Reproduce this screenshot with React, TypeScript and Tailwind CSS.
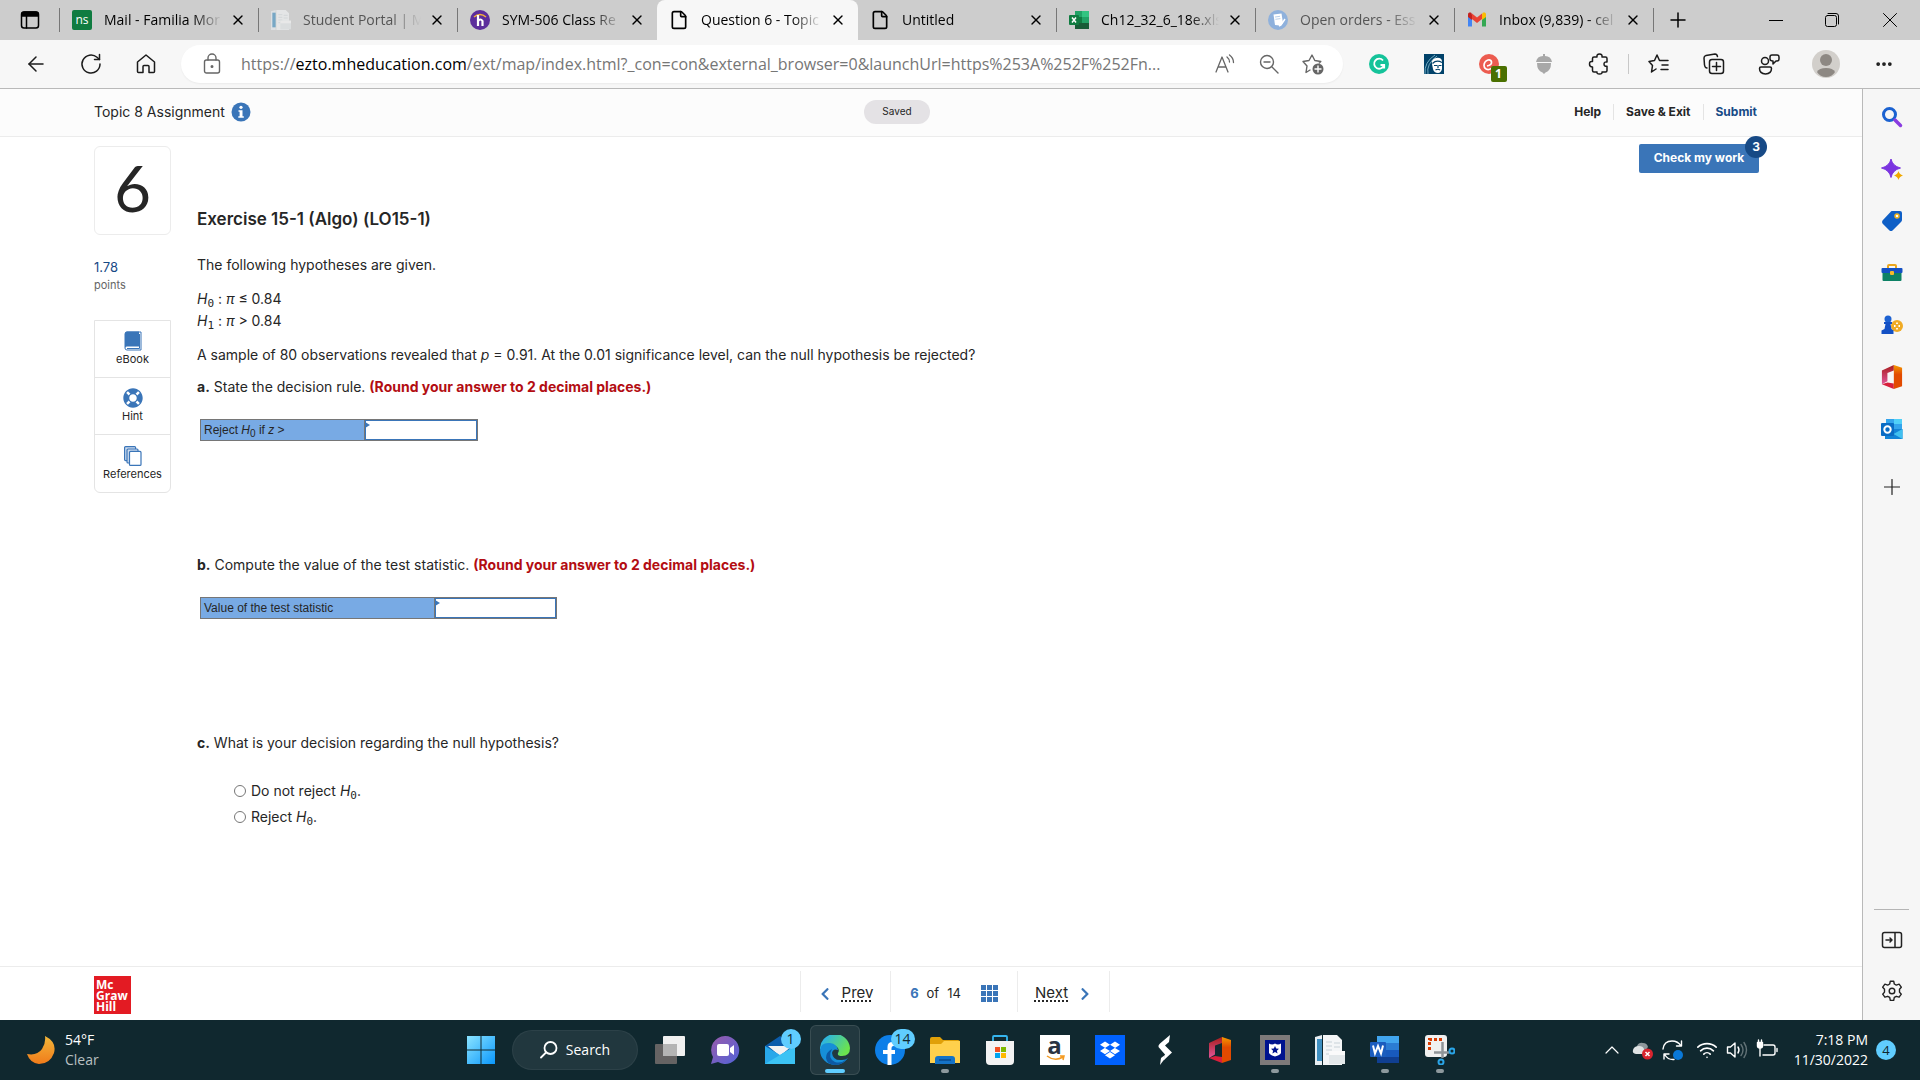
import { useState } from "react";
import type { ReactNode } from "react";
import {
  Plus,
  X,
  File,
  ArrowLeft,
  Ellipsis,
  ChevronUp,
  Wifi,
} from "lucide-react";
import { FaLifeRing, FaDropbox, FaChevronLeft, FaChevronRight } from "react-icons/fa";

const line = {
  fill: "none",
  stroke: "currentColor",
  strokeLinecap: "round" as const,
  strokeLinejoin: "round" as const,
};

/* ---------- tab icons ---------- */

function DocsIcon({ className }: { className?: string }) {
  return (
    <svg viewBox="0 0 30 30" className={className}>
      <path d="M0 2l7-2v30H0z" fill="#e8eef2" />
      <path d="M2 4h5v22H2z" fill="#3f8fc0" />
      <path d="M8 0h14l5 5v25H8z" fill="#f4f6f7" />
      <path d="M11 7h6M11 11h6M11 15h6M11 19h6M19 8h6M19 12h6" stroke="#c8d2d8" />
      <path d="M14 16h16v13H14z" fill="#e3e8ea" />
      <path d="M14 16h16v4H14z" fill="#fafafa" />
    </svg>
  );
}

function ExcelIcon() {
  return (
    <svg viewBox="0 0 20 20" className="size-5">
      <path d="M6 1h7v6H6z" fill="#21a366" />
      <path d="M13 1h7v6h-7z" fill="#33c481" />
      <path d="M6 7h7v6H6z" fill="#107c41" />
      <path d="M13 7h7v6h-7z" fill="#21a366" />
      <path d="M6 13h14v6H6z" fill="#185c37" />
      <rect y="5" width="10" height="10" rx="1" fill="#107c41" />
      <path d="M3 7.500l4 5M7 7.500l-4 5" stroke="#fff" strokeWidth="1.500" />
    </svg>
  );
}

function GmailIcon() {
  return (
    <svg viewBox="0 0 20 20" className="size-5">
      <path d="M1 4.500v12h4V9z" fill="#4285f4" />
      <path d="M19 4.500v12h-4V9z" fill="#34a853" />
      <path d="M15 5v5l4-3V4.500C19 2.500 17 2 15.500 3z" fill="#fbbc04" />
      <path d="M5 5v5L1 7V4.500C1 2.500 3 2 4.500 3z" fill="#c5221f" />
      <path d="M5 3.500l5 4 5-4V9l-5 4-5-4z" fill="#ea4335" />
    </svg>
  );
}

interface Tab {
  title: string;
  icon: ReactNode;
  active?: boolean;
  dim?: boolean;
  noDivider?: boolean;
}

const tabs: Tab[] = [
  {
    title: "Mail - Familia Mor",
    icon: (
      <span className="flex size-5 items-center justify-center rounded-xs bg-[#107c41] text-xs leading-none text-white">
        ns
      </span>
    ),
  },
  { title: "Student Portal | M", icon: <DocsIcon className="size-5 opacity-60" />, dim: true },
  {
    title: "SYM-506 Class Re",
    icon: (
      <svg viewBox="0 0 20 20" className="size-5">
        <circle cx="10" cy="10" r="10" fill="#5c2d9c" />
        <path d="M4 7q6-5 12 0" fill="none" stroke="#f5b335" strokeWidth="1.500" />
        <path d="M8 5v11M8 11q2.500-3 4.500 0v5" fill="none" stroke="#fff" strokeWidth="2.200" />
      </svg>
    ),
    noDivider: true,
  },
  {
    title: "Question 6 - Topic",
    icon: <File className="size-5" strokeWidth={2} />,
    active: true,
    noDivider: true,
  },
  { title: "Untitled", icon: <File className="size-5" strokeWidth={2} /> },
  { title: "Ch12_32_6_18e.xls", icon: <ExcelIcon /> },
  {
    title: "Open orders - Ess",
    icon: (
      <svg viewBox="0 0 20 20" className="size-5">
        <circle cx="10" cy="10" r="10" fill="#8fb1dc" />
        <path d="M5.500 4.500l8-1 1.500 9.500-3 2.500-5-.5z" fill="#fff" />
        <path d="M7 7l5-.7M7.400 9.300l5-.7" stroke="#b9cfea" />
        <path d="M17 9l-4 6-2 1" stroke="#fff" strokeWidth="1.500" fill="none" />
      </svg>
    ),
    dim: true,
  },
  { title: "Inbox (9,839) - cel", icon: <GmailIcon /> },
];

function TabStrip() {
  return (
    <div className="flex h-10 items-stretch bg-[#cdcdcd] text-black">
      <button aria-label="Tab actions" className="flex w-[59px] items-center justify-center">
        <svg viewBox="0 0 20 20" className="size-5" {...line} strokeWidth="1.500">
          <rect x="1.500" y="2" width="17" height="16" rx="2.500" />
          <path d="M2 4q0-2 2.500-2h11Q18 2 18 4v2H2z" fill="currentColor" />
          <path d="M6.500 6v12" />
        </svg>
      </button>
      <span className="my-2 w-px bg-[#777]" />
      {tabs.map((tab) => (
        <div
          key={tab.title}
          className={
            tab.active
              ? "flex w-[201px] rounded-t-lg bg-[#f7f7f7]"
              : "flex w-[199px]"
          }
        >
          <div className="flex min-w-0 flex-1 items-center px-3">
            <span className="w-8 shrink-0">{tab.icon}</span>
            <span
              className={
                "min-w-0 flex-1 overflow-hidden [mask-image:linear-gradient(to_right,black_75%,transparent_100%)] text-sm whitespace-nowrap " +
                (tab.dim ? "text-[#555]" : "text-black")
              }
            >
              {tab.title}
            </span>
            <button aria-label={"Close " + tab.title} className="ml-2 p-0">
              <X className="size-4" strokeWidth={2} />
            </button>
          </div>
          {!tab.noDivider && <span className="my-2 w-px bg-[#777]" />}
        </div>
      ))}
      <button aria-label="New tab" className="ml-1 px-2">
        <Plus className="size-6" strokeWidth={1.5} />
      </button>
      <div className="ml-auto flex">
        <button aria-label="Minimize" className="flex w-14 items-center justify-center">
          <svg viewBox="0 0 14 14" className="size-3.5" {...line}>
            <path d="M0 7.500h14" />
          </svg>
        </button>
        <button aria-label="Restore" className="flex w-14 items-center justify-center">
          <svg viewBox="0 0 14 14" className="size-3.5" {...line}>
            <rect x=".5" y="2.500" width="11" height="11" rx="2" />
            <path d="M3 .5h8q2.500 0 2.500 2.500v8" />
          </svg>
        </button>
        <button aria-label="Close window" className="flex w-15 items-center justify-center">
          <svg viewBox="0 0 14 14" className="size-3.5" {...line}>
            <path d="M.5.5l13 13M13.500.5l-13 13" />
          </svg>
        </button>
      </div>
    </div>
  );
}

/* ---------- toolbar ---------- */

function BarButton({ label, children }: { label: string; children: ReactNode }) {
  return (
    <button aria-label={label} className="flex w-[55px] shrink-0 items-center justify-center">
      {children}
    </button>
  );
}

function Toolbar() {
  return (
    <div className="flex h-12 items-stretch bg-[#f7f7f7] pl-2 text-[#1b1b1b]">
      <BarButton label="Back">
        <ArrowLeft className="size-6" strokeWidth={1.5} />
      </BarButton>
      <BarButton label="Refresh">
        <svg viewBox="0 0 22 22" className="size-[22px]" {...line} strokeWidth="1.500">
          <path d="M20 11a9 9 0 1 1-3-6.700L19.500 6.500" />
          <path d="M19.500 1.500v5h-5" />
        </svg>
      </BarButton>
      <BarButton label="Home">
        <svg viewBox="0 0 20 20" className="size-5" {...line} strokeWidth="1.500">
          <path d="M1.500 8L10 1l8.500 7v9.500q0 1-1 1H13v-6q0-1-1-1H8q-1 0-1 1v6H2.500q-1 0-1-1z" />
        </svg>
      </BarButton>
      <div className="my-[5px] ml-2 flex min-w-0 flex-1 items-center rounded-full bg-white pr-2 pl-[22px] shadow-xs">
        <svg viewBox="0 0 18 22" className="h-[22px] w-[18px] shrink-0 text-[#666]" {...line} strokeWidth="1.400">
          <rect x="1.500" y="7" width="15" height="13" rx="2" />
          <path d="M5 7V5a4 4 0 0 1 8 0v2" />
          <circle cx="9" cy="13.500" r=".8" fill="currentColor" />
        </svg>
        <span className="ml-5 min-w-0 flex-1 truncate text-base text-[#767676]">
          https://<span className="text-black">ezto.mheducation.com</span>
          /ext/map/index.html?_con=con&amp;external_browser=0&amp;launchUrl=https%253A%252F%252Fn...
        </span>
        <button aria-label="Read aloud" className="flex w-11 justify-center text-[#666]">
          <svg viewBox="0 0 20 20" className="size-5" {...line} strokeWidth="1.300">
            <path d="M1 18L7 3l6 15M3 13h8" />
            <path d="M12 3q2.500 2 2.500 5M14.500 1q4 3 4 7.500" />
          </svg>
        </button>
        <button aria-label="Zoom out" className="flex w-11 justify-center text-[#666]">
          <svg viewBox="0 0 20 20" className="size-5" {...line} strokeWidth="1.400">
            <circle cx="8" cy="8" r="6.500" />
            <path d="M13 13l6 6M5 8h6" />
          </svg>
        </button>
        <button aria-label="Add to favorites" className="flex w-11 justify-center text-[#666]">
          <svg viewBox="0 0 22 22" className="size-[22px]" {...line} strokeWidth="1.400">
            <path d="M8 17l-4 2.500 1-6.500-4-4.500 6-1L10 2l2.800 5.500 6 1-1.500 1.500" />
            <circle cx="16" cy="16" r="5.500" fill="#666" stroke="none" />
            <path d="M16 13v6M13 16h6" stroke="#fff" />
          </svg>
        </button>
      </div>
      <div className="mr-2 ml-2 flex">
        <BarButton label="Grammarly">
          <svg viewBox="0 0 20 20" className="size-5">
            <circle cx="10" cy="10" r="10" fill="#15c39a" />
            <path d="M14 6.500a5 5 0 1 0 1 4.500h-3.500M15.200 11v3.500" fill="none" stroke="#fff" strokeWidth="1.800" />
          </svg>
        </BarButton>
        <BarButton label="Alaska">
          <svg viewBox="0 0 20 20" className="size-5">
            <rect width="20" height="20" fill="#01426a" />
            <path d="M1 20Q0 8 11 1M4 20Q2 10 13 2" fill="none" stroke="#8ec5d6" strokeWidth=".8" />
            <path d="M8 10q-1-5 4-6 5-1 6 3v8q-1 4-4 4-4 0-5-4z" fill="#fff" />
            <path d="M8.500 9.500q4-4 9.500-1M10 11.500h3M15 11.500h2.500M11.500 16q2.500-1.500 4.500 0M14 11v3" fill="none" stroke="#01426a" strokeWidth="1.200" />
          </svg>
        </BarButton>
        <BarButton label="Coupons">
          <span className="relative">
            <svg viewBox="0 0 20 20" className="size-5">
              <circle cx="10" cy="10" r="10" fill="#ec5c50" />
              <path d="M8 12q5-1 4.500-4-.5-2.500-3.500-2-4 1.500-4 5.500.5 4.500 5 4 3-.5 5-3" fill="none" stroke="#fff" strokeWidth="1.700" />
            </svg>
            <span className="absolute top-3 left-3 flex h-4 w-4 items-center justify-center rounded-xs bg-[#4a7000] text-xs font-bold text-white">
              1
            </span>
          </span>
        </BarButton>
        <BarButton label="Acorn">
          <svg viewBox="0 0 20 20" className="size-5" fill="#a8a8a8">
            <path d="M9 0h2v2q6 0 7 6H2q1-6 7-6zM3 9h14q0 8-5.500 9.500L10 20l-1.500-1.500Q3 17 3 9z" />
          </svg>
        </BarButton>
        <BarButton label="Extensions">
          <svg viewBox="0 0 22 22" className="size-[22px]" {...line} strokeWidth="1.500">
            <path d="M6 4h3q-.5-3 2.500-3T14 4h3.500q1.500 0 1.500 1.500V9q-3-.5-3 2t3 2.300v4.200q0 1.500-1.500 1.500H14q.5 2-2.500 2T9 19H6q-1.500 0-1.500-1.500V14Q1.500 14 1.500 11t3-2.500v-3Q4.500 4 6 4z" />
          </svg>
        </BarButton>
        <span className="mx-0.5 my-3.5 w-px bg-[#c8c8c8]" />
        <BarButton label="Favorites">
          <svg viewBox="0 0 22 22" className="size-[22px]" {...line} strokeWidth="1.500">
            <path d="M8 16l-4.500 3 1-6.500L1 8.500l5.500-1L9 2l2.500 5.500H20M14 12h6M13 16.500h7" />
          </svg>
        </BarButton>
        <BarButton label="Collections">
          <svg viewBox="0 0 22 22" className="size-[22px]" {...line} strokeWidth="1.500">
            <path d="M4 15Q2 15 1.500 12L1 5q0-2 2-2.500L12 1q2 0 2.500 2.500" />
            <rect x="6.500" y="6.500" width="14" height="14" rx="2.500" />
            <path d="M13.500 9.500v8M9.500 13.500h8" />
          </svg>
        </BarButton>
        <BarButton label="Performance">
          <svg viewBox="0 0 22 22" className="size-[22px]" {...line} strokeWidth="1.500">
            <circle cx="7" cy="8" r="3.500" />
            <path d="M3 14h9q1.500 0 1.500 1.500 0 5-6 5.500-6-.5-6-5.500Q1.500 14 3 14z" />
            <path d="M14 2h5q2 0 2 2v2q0 2-2 2h-1l-3 3V8q-3 0-3-2V4q0-2 2-2z" />
          </svg>
        </BarButton>
        <button aria-label="Profile" className="flex w-15 items-center justify-center">
          <svg viewBox="0 0 28 28" className="size-7">
            <circle cx="14" cy="14" r="14" fill="#d2cfcb" />
            <circle cx="14" cy="10" r="6" fill="#8d8883" />
            <path d="M5 22q2-4 9-4t9 4q-3 5-9 5t-9-5z" fill="#8d8883" />
          </svg>
        </button>
        <button aria-label="Settings and more" className="flex w-14 items-center justify-center">
          <Ellipsis className="size-5" strokeWidth={2.5} />
        </button>
      </div>
    </div>
  );
}

/* ---------- side rail ---------- */

function OfficeIcon({ className }: { className?: string }) {
  return (
    <svg viewBox="0 0 24 26" className={className}>
      <defs>
        <linearGradient id="office-side" x1="0" y1="0" x2="0" y2="1">
          <stop offset="0" stopColor="#a81d1d" />
          <stop offset="1" stopColor="#e0579a" />
        </linearGradient>
        <linearGradient id="office-front" x1="0" y1="0" x2="0" y2="1">
          <stop offset="0" stopColor="#f59a00" />
          <stop offset=".4" stopColor="#e24a00" />
        </linearGradient>
      </defs>
      <path d="M1 6l13-6v6l-7 2.500v9L1 21z" fill="url(#office-side)" />
      <path d="M1 21l6-2 7 1v6z" fill="#d81f3c" />
      <path d="M14 0l9 3v20l-9 3z" fill="url(#office-front)" />
    </svg>
  );
}

const railItems: { label: string; icon: ReactNode }[] = [
  {
    label: "Search",
    icon: (
      <svg viewBox="0 0 22 22" className="size-[22px]" fill="none">
        <circle cx="8.500" cy="8.500" r="6" stroke="#1b62d1" strokeWidth="3" />
        <path d="M14 14l5.500 5.500" stroke="#8a3ce0" strokeWidth="3.500" strokeLinecap="round" />
      </svg>
    ),
  },
  {
    label: "Discover",
    icon: (
      <svg viewBox="0 0 22 22" className="size-[22px]">
        <path d="M10 1q1.500 7 9.500 9-8 2-9.500 9.500Q8.500 12 .5 10 8.500 8 10 1z" fill="#7b35e0" stroke="#7b35e0" />
        <path d="M17.500 13q.7 3.300 4.500 4.500-3.800 1-4.500 4.500-.8-3.500-4.500-4.500 3.700-1.200 4.500-4.500z" fill="#f0a800" />
      </svg>
    ),
  },
  {
    label: "Shopping",
    icon: (
      <svg viewBox="0 0 22 22" className="size-[22px]">
        <path d="M11 1h8q2 0 2 2v7q0 1-1 2l-8.500 8.500q-1.500 1-3 0l-7-7q-1-1.500 0-3L9.500 2q.5-1 1.500-1z" fill="#0f5fc6" />
        <circle cx="16" cy="6" r="2" fill="#fff" stroke="#f2b31b" strokeWidth="1.500" />
      </svg>
    ),
  },
  {
    label: "Tools",
    icon: (
      <svg viewBox="0 0 22 22" className="size-[22px]">
        <path d="M7 7V4q0-1 1-1h6q1 0 1 1v3" fill="none" stroke="#eba61c" strokeWidth="2" />
        <rect x="1.500" y="9" width="19" height="10" rx="1" fill="#0d8165" />
        <rect x=".5" y="6" width="21" height="5" rx="1" fill="#1350c4" />
        <rect x="9" y="9" width="4" height="4" rx="1" fill="#f5b92b" />
      </svg>
    ),
  },
  {
    label: "Games",
    icon: (
      <svg viewBox="0 0 22 22" className="size-[22px]">
        <circle cx="16" cy="12" r="6" fill="#f0ab25" />
        <path d="M16 8.500v1.500M13 12h1.500M17.500 12H19M16 14v1.500" stroke="#fff" strokeWidth="1.800" />
        <circle cx="7" cy="5" r="3.500" fill="#1d62d2" />
        <path d="M3 8h8v2H9.500l1 5 2 1.500V20H.5v-3.500L3.500 15l1-5H3z" fill="#1350c4" />
      </svg>
    ),
  },
  { label: "Office", icon: <OfficeIcon className="h-6 w-[22px]" /> },
  {
    label: "Outlook",
    icon: (
      <svg viewBox="0 0 22 22" className="size-[22px]">
        <path d="M5 1h16v12H5z" fill="#33a4ec" />
        <path d="M13 1h8v5h-8z" fill="#50d0f8" />
        <path d="M4 11h17.500v10H4z" fill="#1383d6" />
        <path d="M21.500 11v10l-9-5z" fill="#41c0f0" />
        <rect y="5" width="13" height="13" rx="1" fill="#0a6cc4" />
        <circle cx="6.500" cy="11.500" r="3.200" fill="none" stroke="#fff" strokeWidth="2" />
      </svg>
    ),
  },
];

function SideRail() {
  return (
    <aside className="flex w-[57px] flex-col items-center bg-[#f6f6f6] pt-0.5 text-[#222]">
      {railItems.map((item) => (
        <button
          key={item.label}
          aria-label={item.label}
          className="flex h-13 w-full items-center justify-center"
        >
          {item.icon}
        </button>
      ))}
      <button aria-label="Add" className="mt-3 flex h-10 items-center">
        <svg viewBox="0 0 16 16" className="size-4" {...line} strokeWidth="1.200">
          <path d="M8 .5v15M.5 8h15" />
        </svg>
      </button>
      <div className="mt-auto mb-4 flex flex-col items-center">
        <span className="mb-4 h-px w-[35px] bg-[#b5b5b5]" />
        <button aria-label="Hide sidebar" className="mb-4 flex h-[27px] items-center">
          <svg viewBox="0 0 22 18" className="h-[18px] w-[22px]" {...line} strokeWidth="1.500">
            <rect x="1.500" y="1.500" width="19" height="15" rx="2" />
            <path d="M14 2v14M5 9h6M9 7l2 2-2 2" />
          </svg>
        </button>
        <button aria-label="Settings" className="mt-2 flex h-[27px] items-center">
          <svg viewBox="0 0 22 22" className="size-[22px]" {...line} strokeWidth="1.400">
            <path d="M9.300 1.200h3.400l.6 2.800 2 1.100 2.800-.9 2.200 3-1.800 2.100v2.800l1.800 2.100-2.200 3-2.800-.9-2 1.100-.6 3H9.300l-.6-3-2-1.100-2.800.9-2.200-3 1.800-2.100V9.300L1.700 7.200l2.200-3 2.800.9 2-1.100z" />
            <circle cx="11" cy="11" r="2.800" />
          </svg>
        </button>
      </div>
    </aside>
  );
}

/* ---------- assignment page ---------- */

function PageHeader() {
  return (
    <header className="grid h-12 grid-cols-[1fr_auto_932px] items-center border-b border-[#ececec] bg-[#fcfcfc] pb-0.5 pl-[94px]">
      <div className="flex items-center gap-1.5 text-sm">
        <h1>Topic 8 Assignment</h1>
        <button aria-label="Assignment information">
          <svg viewBox="0 0 20 20" className="size-5">
            <circle cx="10" cy="10" r="9.500" fill="#3a75b8" />
            <circle cx="10" cy="5.300" r="1.600" fill="#fff" />
            <path d="M7.500 8.300h4v6h1.300v1.500H7.300v-1.500h1.300V9.800H7.500z" fill="#fff" />
          </svg>
        </button>
      </div>
      <div className="w-[66px]">
        <span className="flex h-6 items-center justify-center rounded-xl bg-[#e4e2e5] text-[10px]">Saved</span>
      </div>
      <nav className="mr-[105px] ml-auto flex items-center text-xs font-bold">
        <a href="#help" className="px-3">Help</a>
        <a href="#save" className="border-x border-[#e4e4e4] px-3">Save &amp; Exit</a>
        <a href="#submit" className="pl-3 text-[#174a86]">Submit</a>
      </nav>
    </header>
  );
}

function Hypothesis({ index }: { index: string }) {
  return (
    <>
      <i>H</i>
      <sub className="font-['DejaVu_Sans_Mono',monospace] text-[11px]">{index}</sub>
    </>
  );
}

interface AnswerProps {
  id: string;
  label: ReactNode;
  labelClass: string;
  inputClass: string;
}

function AnswerTable({ id, label, labelClass, inputClass }: AnswerProps) {
  const [value, setValue] = useState("");

  return (
    <table className="ml-[3px] border-collapse font-['Liberation_Sans',Arial,sans-serif] text-xs">
      <tbody>
        <tr className="h-[21px]">
          <th
            scope="row"
            className={"border border-[#767676] bg-[#78aae4] px-[3px] text-left align-top font-normal " + labelClass}
          >
            <label htmlFor={id} className="block leading-5">
              {label}
            </label>
          </th>
          <td className={"relative border border-[#767676] p-0 " + inputClass}>
            <input
              id={id}
              value={value}
              onChange={(e) => setValue(e.target.value)}
              className="block h-5 w-full border border-[#3a75b8] bg-white px-1 outline-none"
            />
            <svg viewBox="0 0 5 6" className="absolute top-0.5 left-0 h-1.5 w-[5px]">
              <path d="M0 0l5 3-5 3z" fill="#3a75b8" />
            </svg>
          </td>
        </tr>
      </tbody>
    </table>
  );
}

function ToolLinks() {
  const items = [
    {
      label: "eBook",
      icon: (
        <svg viewBox="0 0 18 20" className="h-5 w-[18px]">
          <path d="M3 1h14v18H3Q1 19 1 17V3q0-2 2-2z" fill="#fff" stroke="#3a75b8" />
          <path d="M3 .5h12v15H3Q.5 16 1 18V2.500Q1 .5 3 .5z" fill="#3a75b8" />
          <path d="M3 17.500h12.500V3" fill="none" stroke="#3a75b8" />
        </svg>
      ),
    },
    { label: "Hint", icon: <FaLifeRing className="size-5 text-[#3a75b8]" /> },
    {
      label: "References",
      icon: (
        <svg viewBox="0 0 18 20" className="h-5 w-[18px]" fill="#fff" stroke="#3a75b8" strokeWidth="1.200">
          <rect x=".6" y=".6" width="11" height="14" rx="1" fill="#cddbee" />
          <rect x="3" y="3" width="11" height="14" rx="1" fill="#cddbee" />
          <rect x="5.500" y="5.400" width="11.500" height="14" rx="1" />
        </svg>
      ),
    },
  ];

  return (
    <div className="mt-[25px] divide-y divide-[#e4e4e4] rounded-b-md border border-[#e4e4e4]">
      {items.map((item) => (
        <button
          key={item.label}
          className="flex h-[57px] w-full flex-col items-center justify-center gap-0.5 pb-0.5 text-[11px] leading-3"
        >
          {item.icon}
          {item.label}
        </button>
      ))}
    </div>
  );
}

const red = "font-bold text-[#b30d12]";

function Question() {
  const [choice, setChoice] = useState("");

  return (
    <main className="flex flex-1 items-start pr-[103px] pl-[94px]">
      <div className="mt-[9px] w-[77px] shrink-0">
        <div className="flex h-[89px] items-center justify-center rounded-md border border-[#ececec] pb-1.5 font-['Lato',sans-serif] text-[64px] leading-none">
          6
        </div>
        <p className="mt-6 text-[13px] leading-4 text-[#174a86]">1.78</p>
        <p className="text-[11px] leading-5 text-[#666]">points</p>
        <ToolLinks />
      </div>

      <article className="ml-[26px] flex-1 text-sm leading-5">
        <h2 className="mt-[70px] text-[17px] leading-6 font-semibold">Exercise 15-1 (Algo) (LO15-1)</h2>
        <p className="mt-6">The following hypotheses are given.</p>
        <div className="mt-[13px] leading-[22px]">
          <p>
            <Hypothesis index="0" /> : <i>π</i> ≤ 0.84
          </p>
          <p>
            <Hypothesis index="1" /> : <i>π</i> &gt; 0.84
          </p>
        </div>
        <p className="mt-[13px]">
          A sample of 80 observations revealed that <i>p</i> = 0.91. At the 0.01 significance level, can the null
          hypothesis be rejected?
        </p>
        <p className="mt-3">
          <b>a.</b> State the decision rule. <span className={red}>(Round your answer to 2 decimal places.)</span>
        </p>
        <div className="mt-[22px] mb-[114px]">
          <AnswerTable
            id="reject-z"
            label={
              <>
                Reject <i>H</i>
                <sub className="text-[10px]">0</sub> if <i>z</i> &gt;
              </>
            }
            labelClass="w-[164px]"
            inputClass="w-[113px]"
          />
        </div>
        <p>
          <b>b.</b> Compute the value of the test statistic.{" "}
          <span className={red}>(Round your answer to 2 decimal places.)</span>
        </p>
        <div className="mt-[22px] mb-[114px]">
          <AnswerTable
            id="test-statistic"
            label="Value of the test statistic"
            labelClass="w-[234px]"
            inputClass="w-[122px]"
          />
        </div>
        <p>
          <b>c.</b> What is your decision regarding the null hypothesis?
        </p>
        <div className="mt-[25px] ml-[37px] flex flex-col items-start">
          {["Do not reject", "Reject"].map((text) => (
            <label key={text} className="flex h-[26px] items-center gap-[5px]">
              <input
                type="radio"
                name="decision"
                value={text}
                checked={choice === text}
                onChange={() => setChoice(text)}
                className="size-3"
              />
              <span>
                {text} <Hypothesis index="0" />.
              </span>
            </label>
          ))}
        </div>
      </article>

      <button className="relative mt-[7px] -ml-[120px] h-[29px] w-[120px] rounded-xs bg-[#3a75b8] pb-0.5 text-xs font-bold text-white">
        Check my work
        <span className="absolute -top-2 -right-2 flex size-[22px] items-center justify-center rounded-full bg-[#174a86]">
          3
        </span>
      </button>
    </main>
  );
}

function PageFooter() {
  return (
    <footer className="grid h-[54px] grid-cols-[1fr_auto_752px] items-start border-t border-[#ececec] pl-[94px]">
      <div className="mt-[9px] flex h-[38px] w-[37px] flex-col justify-center bg-[#e31b23] pl-0.5 font-['Open_Sans',sans-serif] text-xs leading-[11px] font-bold text-white">
        <span>Mc</span>
        <span>Graw</span>
        <span>Hill</span>
      </div>
      <nav className="mt-1 flex h-[41px] items-stretch divide-x divide-[#ececec] border-x border-[#ececec] text-[15px]">
        <button className="flex w-[90px] items-center justify-center gap-2.5 pt-1">
          <FaChevronLeft className="size-3.5 text-[#3a75b8]" />
          <span className="underline decoration-dotted decoration-2 underline-offset-2">Prev</span>
        </button>
        <div className="flex w-[127px] items-center justify-center gap-2 pt-1 text-[13px]">
          <b className="text-[#3a75b8]">6</b>
          <span>of</span>
          <span>14</span>
          <button aria-label="Question list" className="ml-3">
            <svg viewBox="0 0 17 17" className="size-[17px]" fill="#3a75b8">
              <path d="M0 0h5v5H0zM6 0h5v5H6zM12 0h5v5h-5zM0 6h5v5H0zM6 6h5v5H6zM12 6h5v5h-5zM0 12h5v5H0zM6 12h5v5H6zM12 12h5v5h-5z" />
            </svg>
          </button>
        </div>
        <button className="flex w-[91px] items-center justify-center gap-2.5 pt-1">
          <span className="underline decoration-dotted decoration-2 underline-offset-2">Next</span>
          <FaChevronRight className="size-3.5 text-[#3a75b8]" />
        </button>
      </nav>
    </footer>
  );
}

/* ---------- taskbar ---------- */

function Badge({ children }: { children: ReactNode }) {
  return (
    <span className="absolute -top-1.5 left-4 flex h-5 min-w-5 items-center justify-center rounded-full bg-[#60cdff] px-1 text-sm leading-none text-[#10282f]">
      {children}
    </span>
  );
}

interface TaskbarApp {
  label: string;
  icon: ReactNode;
  badge?: string;
  running?: boolean;
  active?: boolean;
}

const apps: TaskbarApp[] = [
  {
    label: "Task view",
    icon: (
      <svg viewBox="0 0 30 30" className="size-[30px]">
        <rect x="8" y="1" width="22" height="20" rx="1" fill="#f0f0f0" />
        <rect y="9" width="22" height="20" rx="1" fill="#656363" />
        <path d="M8 9h14v12H8z" fill="#b4b4b4" />
      </svg>
    ),
  },
  {
    label: "Chat",
    icon: (
      <svg viewBox="0 0 30 30" className="size-[30px]">
        <defs>
          <linearGradient id="chat" x1="0" y1="0" x2="1" y2="1">
            <stop offset="0" stopColor="#9a5bab" />
            <stop offset="1" stopColor="#5163d8" />
          </linearGradient>
        </defs>
        <path d="M15 1a14 14 0 1 1-7 26l-7 2 2-7A14 14 0 0 1 15 1z" fill="url(#chat)" />
        <rect x="7" y="9" width="12" height="12" rx="2" fill="#fff" />
        <path d="M20 13l4-3v10l-4-3z" fill="#fff" />
      </svg>
    ),
  },
  {
    label: "Mail",
    badge: "1",
    icon: (
      <svg viewBox="0 0 30 30" className="size-[30px]">
        <path d="M0 11L15 1l15 10v10H0z" fill="#0b5cab" />
        <path d="M3 11h24L15 21z" fill="#f2f2f2" />
        <path d="M0 11l15 9 15-9v18H0z" fill="#28a8ea" />
        <path d="M0 29l30-18v18z" fill="#3cc3f4" />
      </svg>
    ),
  },
  {
    label: "Microsoft Edge",
    active: true,
    icon: (
      <svg viewBox="0 0 30 30" className="size-[30px]">
        <defs>
          <linearGradient id="edge-top" x1="0" y1="0" x2="1" y2=".5">
            <stop offset=".2" stopColor="#2cb4e4" />
            <stop offset="1" stopColor="#6be34e" />
          </linearGradient>
        </defs>
        <path d="M0 15a15 15 0 0 1 30-2q0 8-8 8-5 0-4-3 2-3-1-6-5-4-11-1-5 2-6 4z" fill="url(#edge-top)" />
        <path d="M0 15q1-8 10-7 7 1 8 7-5-2-6 3 1 8 10 7 4 0 6-2-5 7-13 7A15 15 0 0 1 0 15z" fill="#168fd8" />
        <path d="M12 14q-5 9 3 13 6 2 12-3-5 6-12 6-8 0-9-7 0-6 6-9z" fill="#0c59a4" />
      </svg>
    ),
  },
  {
    label: "Facebook",
    badge: "14",
    icon: (
      <svg viewBox="0 0 30 30" className="size-[30px]">
        <circle cx="15" cy="15" r="15" fill="#0d7fe8" />
        <path d="M12.500 30V19H8v-4h4.500v-3q0-5 5-5H20v4h-1.500q-2 0-2 2v2H20v4h-3.500v11z" fill="#fff" />
      </svg>
    ),
  },
  {
    label: "File Explorer",
    running: true,
    icon: (
      <svg viewBox="0 0 30 30" className="size-[30px]">
        <path d="M0 4q0-2 2-2h8l3 3h15q2 0 2 2v6H0z" fill="#e0a008" />
        <path d="M0 9h11l3-3h16v22H0z" fill="#ffd04c" />
        <path d="M5 29v-5q0-3 3-3h14q3 0 3 3v5z" fill="#1573c6" />
        <path d="M9 25h12" stroke="#0a4a8c" strokeWidth="1.500" />
      </svg>
    ),
  },
  {
    label: "Microsoft Store",
    icon: (
      <svg viewBox="0 0 30 30" className="size-[30px]">
        <path d="M8 7V2q0-1 1-1h12q1 0 1 1v5" fill="none" stroke="#35b5ee" strokeWidth="1.800" />
        <path d="M1 6h28v20q0 4-4 4H5q-4 0-4-4z" fill="#f3f3f3" />
        <path d="M10 12h5v5h-5z" fill="#f25022" />
        <path d="M16 12h5v5h-5z" fill="#7fba00" />
        <path d="M10 18h5v5h-5z" fill="#00a4ef" />
        <path d="M16 18h5v5h-5z" fill="#ffb900" />
      </svg>
    ),
  },
  {
    label: "Amazon",
    icon: (
      <span className="relative flex size-[30px] items-start justify-center bg-white font-['Open_Sans',sans-serif] text-2xl leading-5 font-bold text-[#2b3442]">
        a
        <svg viewBox="0 0 20 6" className="absolute bottom-1 left-1.5 h-1.5 w-5" fill="none" stroke="#f49b22" strokeWidth="1.500">
          <path d="M1 1q8 6 16 1M14 1h4l-1 4" />
        </svg>
      </span>
    ),
  },
  {
    label: "Dropbox",
    icon: (
      <span className="flex size-[30px] items-center justify-center bg-[#0061fe] text-white">
        <FaDropbox className="size-5" />
      </span>
    ),
  },
  {
    label: "Studio",
    icon: (
      <svg viewBox="0 0 30 30" className="size-[30px]" fill="#fff">
        <path d="M20 0l-1 7-4 3.500 7 7-8.500 8 1.500-6L8.500 12Q8 10 10 8.500z" />
        <path d="M15 20l-.5 4-4.500 6 1-7z" />
      </svg>
    ),
  },
  { label: "Office", icon: <OfficeIcon className="h-7 w-6" /> },
  {
    label: "McGraw",
    running: true,
    icon: (
      <svg viewBox="0 0 30 30" className="size-[30px]">
        <rect width="30" height="30" fill="#7d7a7a" />
        <rect x="5" y="5" width="20" height="20" fill="#00138f" />
        <path d="M9 8.500q3 2 6 0 3 2 6 0V18q-1 2-6 3.500Q10 20 9 18z" fill="#fff" />
        <path d="M15 11l1.200 2.600 2.800.2-2.100 1.900.7 2.800L15 17l-2.600 1.500.7-2.800-2.100-1.900 2.800-.2z" fill="#00138f" />
      </svg>
    ),
  },
  { label: "Documents", icon: <DocsIcon className="size-[30px]" /> },
  {
    label: "Word",
    running: true,
    icon: (
      <svg viewBox="0 0 30 30" className="size-[30px]">
        <path d="M7 1h22v7H7z" fill="#41a5ee" />
        <path d="M7 8h22v7H7z" fill="#2b7cd3" />
        <path d="M7 15h22v7H7z" fill="#185abd" />
        <path d="M7 22h22v6H7z" fill="#103f91" />
        <rect y="7" width="16" height="15" rx="1" fill="#1b5dbe" />
        <path d="M3 10.500l2 8 3-7.500 3 7.500 2-8" fill="none" stroke="#fff" strokeWidth="2" />
      </svg>
    ),
  },
  {
    label: "Snipping Tool",
    running: true,
    icon: (
      <svg viewBox="0 0 30 30" className="size-[30px]">
        <rect width="22" height="22" rx="3" fill="#f0f0f0" />
        <path d="M17 4.500H4.500V17" fill="none" stroke="#d83b01" strokeWidth="3" strokeDasharray="3 2" />
        <path d="M17.500 7v16M9 17.500h15" stroke="#8f9498" strokeWidth="2.500" />
        <circle cx="27" cy="16" r="2.500" fill="none" stroke="#2aa5e8" strokeWidth="2" />
        <circle cx="16" cy="27" r="2.500" fill="none" stroke="#2aa5e8" strokeWidth="2" />
      </svg>
    ),
  },
];

function Taskbar() {
  return (
    <div className="grid h-15 grid-cols-[1fr_auto_1fr] items-center bg-[#10282f] text-sm text-white">
      <button className="flex items-center gap-2.5 justify-self-start pl-[27px] text-left leading-5">
        <svg viewBox="0 0 28 28" className="size-7">
          <defs>
            <linearGradient id="moon" x1="0" y1="0" x2="0" y2="1">
              <stop offset="0" stopColor="#f2b73a" />
              <stop offset="1" stopColor="#f07b1a" />
            </linearGradient>
          </defs>
          <path d="M18 0q12 6 9 17-4 11-15 11Q3 27 0 18q10 2 15-5 4-6 3-13z" fill="url(#moon)" />
        </svg>
        <span className="flex flex-col">
          <span>54°F</span>
          <span className="text-[#b9c0c2]">Clear</span>
        </span>
      </button>

      <div className="flex items-center">
        <button aria-label="Start" className="flex w-[55px] justify-center">
          <svg viewBox="0 0 30 30" className="size-[30px]">
            <defs>
              <linearGradient id="start" x1="0" y1="0" x2="1" y2="1">
                <stop offset="0" stopColor="#8be4ff" />
                <stop offset="1" stopColor="#0a97fb" />
              </linearGradient>
            </defs>
            <path d="M1 1h13.500v13.500H1zM15.500 1H29v13.500H15.500zM1 15.500h13.500V29H1zM15.500 15.500H29V29H15.500z" fill="url(#start)" />
          </svg>
        </button>
        <button className="mx-1 flex h-10 w-[126px] items-center justify-center gap-2 rounded-full border border-white/5 bg-[#21373e] text-sm">
          <svg viewBox="0 0 18 18" className="size-[18px]" {...line} strokeWidth="1.800">
            <circle cx="10.500" cy="7" r="6" />
            <path d="M6 11.500l-5 5" />
          </svg>
          Search
        </button>
        {apps.map((app) => (
          <button key={app.label} aria-label={app.label} className="relative flex w-[55px] justify-center">
            <span
              className={
                app.active
                  ? "flex size-[50px] items-center justify-center rounded-md border border-white/10 bg-white/8"
                  : "flex size-[50px] items-center justify-center"
              }
            >
              <span className="relative">
                {app.icon}
                {app.badge && <Badge>{app.badge}</Badge>}
              </span>
            </span>
            {app.active && <span className="absolute bottom-0.5 h-1 w-5 rounded-full bg-[#60cdff]" />}
            {app.running && <span className="absolute bottom-0.5 h-1 w-2 rounded-full bg-[#8d999d]" />}
          </button>
        ))}
      </div>

      <div className="flex items-center justify-self-end pr-6">
        <button aria-label="Hidden icons" className="mr-2">
          <ChevronUp className="size-6" strokeWidth={1.2} />
        </button>
        <svg viewBox="0 0 22 22" className="size-[22px]">
          <path d="M5 7q2-4 6-3 4 0 5 4l-3 4H5z" fill="#8d979b" />
          <path d="M1 11q1-4 6-4 4 0 5 3v5H4q-4-.5-3-4z" fill="#dfe2e3" />
          <circle cx="15.500" cy="15" r="5.500" fill="#d9252f" />
          <path d="M13.500 13l4 4M17.500 13l-4 4" stroke="#fff" strokeWidth="1.500" />
        </svg>
        <svg viewBox="0 0 22 22" className="ml-2 size-[22px]" {...line} strokeWidth="1.400">
          <path d="M1 10q1-8 9-8 6 0 9 5M19.500 2v5h-5M2 20v-5h5M3 16q3 5 9 4.500" />
          <circle cx="16" cy="16" r="5" fill="#0a78d7" stroke="none" />
        </svg>
        <Wifi className="ml-3 size-[22px]" strokeWidth={1.8} />
        <svg viewBox="0 0 22 22" className="ml-2 size-[22px]" {...line} strokeWidth="1.400">
          <path d="M1.500 8h3L9 4v14l-4.500-4h-3z" />
          <path d="M12 8q2 3 0 6" />
          <path d="M15 5.500q4 5.500 0 11M18 3.500q5 7.500 0 15" opacity=".35" />
        </svg>
        <svg viewBox="0 0 22 22" className="ml-2 size-[22px]" {...line} strokeWidth="1.400">
          <path d="M8 6h9q2 0 2 2v6q0 2-2 2H7M21 9.500v3M4 8v9" />
          <path d="M1.500 3.500h5V7q0 2-2.500 2T1.500 7zM2.500 3V1M5.500 3V1" fill="currentColor" />
        </svg>
        <span className="ml-4 flex flex-col text-right leading-5">
          <span>7:18 PM</span>
          <span>11/30/2022</span>
        </span>
        <span className="ml-2 flex size-5 items-center justify-center rounded-full bg-[#60cdff] text-[13px] text-[#10282f]">
          4
        </span>
      </div>
    </div>
  );
}

export default function App() {
  return (
    <div className="flex min-h-screen flex-col bg-white font-['Open_Sans','Noto_Sans',sans-serif]">
      <TabStrip />
      <Toolbar />
      <div className="flex flex-1 border-t border-[#b9b9b9]">
        <div className="flex min-w-0 flex-1 flex-col border-r border-[#b9b9b9] font-['Inter',sans-serif] text-[#262626]">
          <PageHeader />
          <Question />
          <PageFooter />
        </div>
        <SideRail />
      </div>
      <Taskbar />
    </div>
  );
}
